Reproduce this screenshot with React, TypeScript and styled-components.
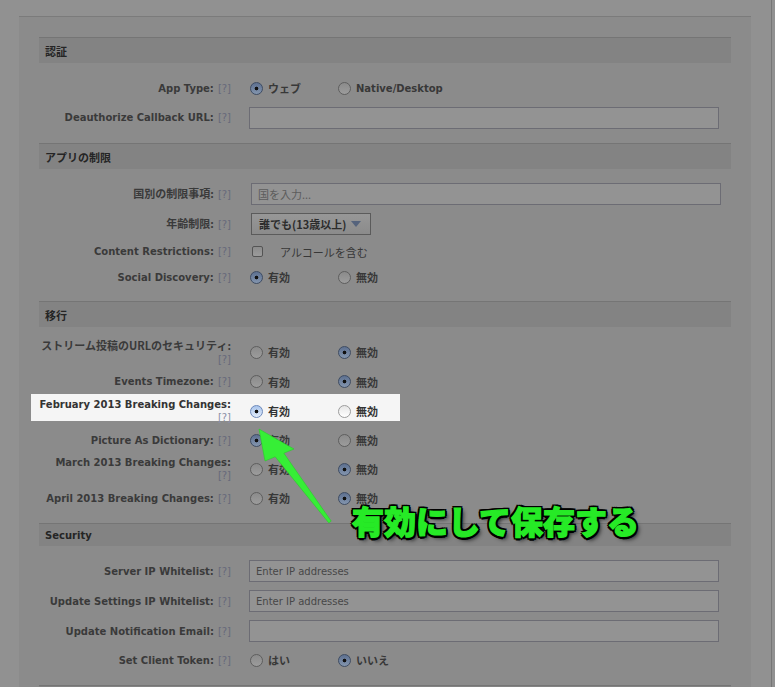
import React from "react";
import styled, { createGlobalStyle, css } from "styled-components";

const Global = createGlobalStyle`
  html, body { margin: 0; padding: 0; overflow: hidden; }
  body {
    background: #919191;
    font-family: "DejaVu Sans", "Noto Sans CJK JP", sans-serif;
    font-size: 10px;
    color: #3a3a3a;
  }
`;

const Page = styled.div`
  position: relative;
  width: 772px;
  height: 687px;
  box-sizing: border-box;
  border-right: 1px solid #767676;
  padding-top: 16px;
  overflow: hidden;
`;

const Panel = styled.div`
  margin-left: 19px;
  width: 732px;
  min-height: 720px;
  box-sizing: border-box;
  border-top: 1px solid #7b7b7b;
  background: #8b8b8b;
  padding: 20px 20px 0;
`;

const Section = styled.section``;

const SectionHeader = styled.h3<{ $h?: number }>`
  margin: 0;
  height: ${(p) => p.$h ?? 26}px;
  box-sizing: border-box;
  border-top: 1px solid #757575;
  background: #838383;
  padding: 0 6px;
  display: flex;
  align-items: center;
  font-size: 10px;
  font-weight: bold;
  color: #252525;
`;

const Body = styled.div`
  padding: 10px 0 11px;
`;

const Row = styled.div<{ $h: number; $lit?: boolean }>`
  position: relative;
  z-index: 0;
  display: grid;
  grid-template-columns: 192px 1fr;
  column-gap: 18px;
  align-items: center;
  height: ${(p) => p.$h}px;
  ${(p) =>
    p.$lit &&
    css`
      &::before {
        content: "";
        position: absolute;
        left: -8px;
        top: -2px;
        width: 369px;
        height: 27px;
        background: #f5f5f5;
        z-index: -1;
      }
    `}
`;

const Label = styled.div<{ $lit?: boolean }>`
  text-align: right;
  font-weight: bold;
  line-height: 13px;
  white-space: nowrap;
  color: ${(p) => (p.$lit ? "#333333" : "#3a3a3a")};
`;

const Help = styled.span<{ $below?: boolean; $lit?: boolean }>`
  font-weight: normal;
  color: ${(p) => (p.$lit ? "#8a90a6" : "#66697a")};
  ${(p) =>
    p.$below
      ? css`
          display: block;
        `
      : css`
          margin-left: 4px;
        `}
`;

const Ja = styled.span`
  font-family: "Noto Sans CJK JP", "DejaVu Sans", sans-serif;
  font-size: 11px;
`;

const Options = styled.div`
  display: flex;
  align-items: center;
  padding-left: 1px;
`;

const Option = styled.div<{ $lit?: boolean }>`
  width: 88px;
  display: flex;
  align-items: center;
  gap: 5px;
  font-weight: bold;
  color: ${(p) => (p.$lit ? "#333333" : "#383838")};
`;

const Radio = styled.span<{ $on?: boolean; $lit?: boolean }>`
  flex: none;
  width: 13px;
  height: 13px;
  box-sizing: border-box;
  border-radius: 50%;
  ${(p) => {
    if (p.$lit && p.$on)
      return css`
        border: 1px solid #6d89bb;
        background: radial-gradient(circle, #111 0 1.5px, transparent 2.2px),
          linear-gradient(#a8c4ec, #e2ecfa);
      `;
    if (p.$lit)
      return css`
        border: 1px solid #9c9c9c;
        background: linear-gradient(#e6e6e6, #ffffff);
      `;
    if (p.$on)
      return css`
        border: 1px solid #3e4c63;
        background: radial-gradient(circle, #111 0 1.5px, transparent 2.2px),
          linear-gradient(#5d7090, #8395ae);
      `;
    return css`
      border: 1px solid #5e5e5e;
      background: linear-gradient(#8b8b8b, #9c9c9c);
    `;
  }}
`;

const TextInput = styled.input<{ $ja?: boolean }>`
  display: block;
  margin: 0 0 0 ${(p) => (p.$ja ? 2 : 0)}px;
  width: 470px;
  height: 22px;
  box-sizing: border-box;
  border: 1px solid #6c6c74;
  background: #939393;
  padding: 0 6px;
  font-family: ${(p) =>
    p.$ja
      ? `"Noto Sans CJK JP", "DejaVu Sans", sans-serif`
      : `"DejaVu Sans", "Noto Sans CJK JP", sans-serif`};
  font-size: ${(p) => (p.$ja ? 11 : 10)}px;
  color: #444;
  outline: none;
  &::placeholder {
    color: ${(p) => (p.$ja ? "#5c5c5c" : "#474747")};
    opacity: 1;
  }
`;

const Select = styled.div`
  margin-left: 2px;
  width: 120px;
  height: 22px;
  box-sizing: border-box;
  border: 1px solid #5b5b5b;
  background: linear-gradient(#979797, #8b8b8b);
  display: flex;
  align-items: center;
  justify-content: space-between;
  padding: 0 9px 0 7px;
  font-family: "Noto Sans CJK JP", "DejaVu Sans", sans-serif;
  font-size: 11px;
  font-weight: bold;
  color: #2c2c2c;
`;

const Caret = styled.span`
  width: 0;
  height: 0;
  border-left: 5px solid transparent;
  border-right: 5px solid transparent;
  border-top: 6px solid #55637c;
`;

const CheckLine = styled.div`
  display: flex;
  align-items: center;
  gap: 17px;
  padding-left: 3px;
  color: #383838;
`;

const Check = styled.span`
  flex: none;
  width: 11px;
  height: 11px;
  box-sizing: border-box;
  border: 1px solid #545454;
  border-radius: 2px;
  background: linear-gradient(#8c8c8c, #9b9b9b);
`;

const Callout = styled.div`
  position: absolute;
  left: 352px;
  top: 506px;
  font-family: "Noto Sans CJK JP", sans-serif;
  font-size: 32px;
  font-weight: 900;
  line-height: 28px;
  white-space: nowrap;
  color: #26ea26;
  -webkit-text-stroke: 1.2px #26ea26;
  text-shadow: 2.5px 0 0 #000, -2.5px 0 0 #000, 0 2.5px 0 #000,
    0 -2.5px 0 #000, 2px 2px 0 #000, -2px -2px 0 #000, 2px -2px 0 #000,
    -2px 2px 0 #000, 3px 3px 4px rgba(0, 0, 0, 0.75);
`;

const Arrow = styled.svg`
  position: absolute;
  left: 255px;
  top: 425px;
  width: 82px;
  height: 102px;
  overflow: visible;
`;

type Opt = { text: React.ReactNode; on?: boolean };

const RadioGroup = ({ opts, lit }: { opts: Opt[]; lit?: boolean }) => (
  <Options>
    {opts.map((o, i) => (
      <Option key={i} $lit={lit}>
        <Radio $on={o.on} $lit={lit} />
        {o.text}
      </Option>
    ))}
  </Options>
);

const yes = <Ja>有効</Ja>;
const no = <Ja>無効</Ja>;

const onOff = (first: boolean): Opt[] => [
  { text: yes, on: first },
  { text: no, on: !first },
];

export default function App() {
  return (
    <>
      <Global />
      <Page>
        <Panel>
          <Section>
            <SectionHeader>
              <Ja>認証</Ja>
            </SectionHeader>
            <Body>
              <Row $h={30}>
                <Label>
                  App Type:<Help>[?]</Help>
                </Label>
                <RadioGroup
                  opts={[
                    { text: <Ja>ウェブ</Ja>, on: true },
                    { text: "Native/Desktop" },
                  ]}
                />
              </Row>
              <Row $h={29}>
                <Label>
                  Deauthorize Callback URL:<Help>[?]</Help>
                </Label>
                <TextInput readOnly />
              </Row>
            </Body>
          </Section>

          <Section>
            <SectionHeader>
              <Ja>アプリの制限</Ja>
            </SectionHeader>
            <Body>
              <Row $h={30}>
                <Label>
                  <Ja>国別の制限事項:</Ja>
                  <Help>[?]</Help>
                </Label>
                <TextInput $ja readOnly placeholder="国を入力..." />
              </Row>
              <Row $h={30}>
                <Label>
                  <Ja>年齢制限:</Ja>
                  <Help>[?]</Help>
                </Label>
                <Select>
                  誰でも(13歳以上)
                  <Caret />
                </Select>
              </Row>
              <Row $h={25}>
                <Label>
                  Content Restrictions:<Help>[?]</Help>
                </Label>
                <CheckLine>
                  <Check />
                  <Ja>アルコールを含む</Ja>
                </CheckLine>
              </Row>
              <Row $h={26}>
                <Label>
                  Social Discovery:<Help>[?]</Help>
                </Label>
                <RadioGroup opts={onOff(true)} />
              </Row>
            </Body>
          </Section>

          <Section>
            <SectionHeader>
              <Ja>移行</Ja>
            </SectionHeader>
            <Body>
              <Row $h={30}>
                <Label>
                  <Ja>ストリーム投稿のURLのセキュリティ:</Ja>
                  <Help $below>[?]</Help>
                </Label>
                <RadioGroup opts={onOff(false)} />
              </Row>
              <Row $h={29}>
                <Label>
                  Events Timezone:<Help>[?]</Help>
                </Label>
                <RadioGroup opts={onOff(false)} />
              </Row>
              <Row $h={30} $lit>
                <Label $lit>
                  February 2013 Breaking Changes:
                  <Help $below $lit>
                    [?]
                  </Help>
                </Label>
                <RadioGroup opts={onOff(true)} lit />
              </Row>
              <Row $h={28}>
                <Label>
                  Picture As Dictionary:<Help>[?]</Help>
                </Label>
                <RadioGroup opts={onOff(true)} />
              </Row>
              <Row $h={30}>
                <Label>
                  March 2013 Breaking Changes:
                  <Help $below>[?]</Help>
                </Label>
                <RadioGroup opts={onOff(false)} />
              </Row>
              <Row $h={28}>
                <Label>
                  April 2013 Breaking Changes:<Help>[?]</Help>
                </Label>
                <RadioGroup opts={onOff(false)} />
              </Row>
            </Body>
          </Section>

          <Section>
            <SectionHeader $h={23}>Security</SectionHeader>
            <Body>
              <Row $h={30}>
                <Label>
                  Server IP Whitelist:<Help>[?]</Help>
                </Label>
                <TextInput readOnly placeholder="Enter IP addresses" />
              </Row>
              <Row $h={30}>
                <Label>
                  Update Settings IP Whitelist:<Help>[?]</Help>
                </Label>
                <TextInput readOnly placeholder="Enter IP addresses" />
              </Row>
              <Row $h={30}>
                <Label>
                  Update Notification Email:<Help>[?]</Help>
                </Label>
                <TextInput readOnly />
              </Row>
              <Row $h={28}>
                <Label>
                  Set Client Token:<Help>[?]</Help>
                </Label>
                <RadioGroup
                  opts={[
                    { text: <Ja>はい</Ja> },
                    { text: <Ja>いいえ</Ja>, on: true },
                  ]}
                />
              </Row>
            </Body>
          </Section>

          <Section>
            <SectionHeader />
          </Section>
        </Panel>

        <Arrow viewBox="255 425 82 102">
          <polygon
            points="259,429 294,449 283.9,453.2 331.2,521.1 328.8,522.9 275.2,456.8 265,461"
            fill="#36ee36"
            stroke="#2cc82c"
            strokeWidth="0.6"
            strokeLinejoin="round"
          />
        </Arrow>
        <Callout>有効にして保存する</Callout>
      </Page>
    </>
  );
}
